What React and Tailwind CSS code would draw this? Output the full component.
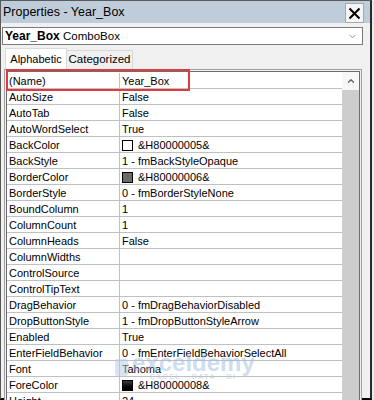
import { ChevronDown, ChevronUp } from 'lucide-react';

const rows = [
    { name: '(Name)', value: 'Year_Box' },
    { name: 'AutoSize', value: 'False' },
    { name: 'AutoTab', value: 'False' },
    { name: 'AutoWordSelect', value: 'True' },
    { name: 'BackColor', value: '&H80000005&', swatch: 'bg-white' },
    { name: 'BackStyle', value: '1 - fmBackStyleOpaque' },
    { name: 'BorderColor', value: '&H80000006&', swatch: 'bg-[#6b6b6b]' },
    { name: 'BorderStyle', value: '0 - fmBorderStyleNone' },
    { name: 'BoundColumn', value: '1' },
    { name: 'ColumnCount', value: '1' },
    { name: 'ColumnHeads', value: 'False' },
    { name: 'ColumnWidths', value: '' },
    { name: 'ControlSource', value: '' },
    { name: 'ControlTipText', value: '' },
    { name: 'DragBehavior', value: '0 - fmDragBehaviorDisabled' },
    { name: 'DropButtonStyle', value: '1 - fmDropButtonStyleArrow' },
    { name: 'Enabled', value: 'True' },
    { name: 'EnterFieldBehavior', value: '0 - fmEnterFieldBehaviorSelectAll' },
    { name: 'Font', value: 'Tahoma' },
    { name: 'ForeColor', value: '&H80000008&', swatch: 'bg-gradient-to-b from-[#3c3c3c] to-black' },
    { name: 'Height', value: '24' },
];

export default function App() {
    return (
        <div className="w-[374px] h-[400px] overflow-hidden bg-[#e9e9e9] font-['Liberation_Sans',Arial,sans-serif] text-black">
            <div className="relative w-[372px] h-[400px] flex flex-col bg-[#f0f0f0] border-l border-t border-[#5a5a5a] border-r-2 border-r-[#2b2b2b] border-b-2 border-b-black">

                {/* Title bar */}
                <div className="h-[22px] shrink-0 flex items-center justify-between bg-[#bfcddb] pl-[2px] pr-[6px]">
                    <span className="text-[12.5px] leading-none">Properties - Year_Box</span>
                    <div className="w-[19px] h-[20px] mt-[2px] flex items-center justify-center bg-[#f4f4f4] border border-[#a8a8a8]">
                        <svg width="13" height="13" viewBox="0 0 13 13">
                            <path d="M1.5 1.5 L11.5 11.5 M11.5 1.5 L1.5 11.5" stroke="black" strokeWidth="2" />
                        </svg>
                    </div>
                </div>

                {/* Object combo */}
                <div className="mt-[4px] ml-[1px] w-[361px] h-[18px] shrink-0 flex items-center justify-between bg-white border border-[#7a7a7a] px-[2px]">
                    <span className="text-[12px] leading-none">
                        <b>Year_Box</b> <span className="text-[11.5px]">ComboBox</span>
                    </span>
                    <ChevronDown className="w-[11px] h-[11px] text-[#666] mr-[2px]" strokeWidth={1.5} />
                </div>

                {/* Tabs */}
                <div className="mt-[3px] ml-[4px] flex items-end shrink-0">
                    <div className="w-[62px] h-[21px] flex items-center justify-center bg-white border border-b-0 border-[#d9d9d9] text-[11px]">
                        Alphabetic
                    </div>
                    <div className="w-[66px] h-[19px] flex items-center justify-center bg-[#f0f0f0] border border-l-0 border-b-0 border-[#d9d9d9] text-[11.5px]">
                        Categorized
                    </div>
                </div>

                {/* Property grid */}
                <div className="ml-[3px] w-[358px] flex-1 border border-[#a0a0a0] p-[1px] bg-[#f0f0f0]">
                    <div className="h-full flex border border-[#6e6e6e] bg-white">
                        <div className="flex-1 pt-[1px]">
                            {rows.map((row) => (
                                <div key={row.name} className="h-[16px] flex text-[11px] leading-[15px]">
                                    <div className="w-[113px] pl-[2px] pt-[1px] border-r border-b border-[#c0c0c0] whitespace-nowrap">
                                        {row.name}
                                    </div>
                                    <div className="flex-1 pl-[2px] pt-[1px] border-b border-[#c0c0c0] flex items-center whitespace-nowrap overflow-hidden">
                                        {row.swatch && (
                                            <span className={`w-[11px] h-[11px] mr-[5px] border border-black ${row.swatch}`} />
                                        )}
                                        {row.value}
                                    </div>
                                </div>
                            ))}
                        </div>

                        {/* Scrollbar */}
                        <div className="w-[17px] flex flex-col bg-[#f7f7f7]">
                            <div className="h-[18px] flex items-center justify-center">
                                <ChevronUp className="w-[10px] h-[10px] text-[#606060]" strokeWidth={3} />
                            </div>
                            <div className="flex-1 bg-[#cdcdcd]" />
                        </div>
                    </div>
                </div>

                {/* Selected (Name) highlight */}
                <div className="absolute left-[5px] top-[68px] w-[184px] h-[22px] border-2 border-[#e0393e]" />

                {/* Watermark */}
                <div className="absolute left-[114px] top-[352px] flex items-center gap-[4px] opacity-50 pointer-events-none">
                    <div className="w-[13px] h-[17px] rounded-[2px] bg-[#b5cbe6]" />
                    <div className="flex flex-col items-center">
                        <span className="text-[24px] leading-[20px] font-bold text-[#9fbde0]">exceldemy</span>
                        <span className="text-[7px] leading-[8px] font-bold tracking-[1.5px] text-[#b0c4dc]">EXCEL · DATA · BI</span>
                    </div>
                </div>
            </div>
        </div>
    );
}
